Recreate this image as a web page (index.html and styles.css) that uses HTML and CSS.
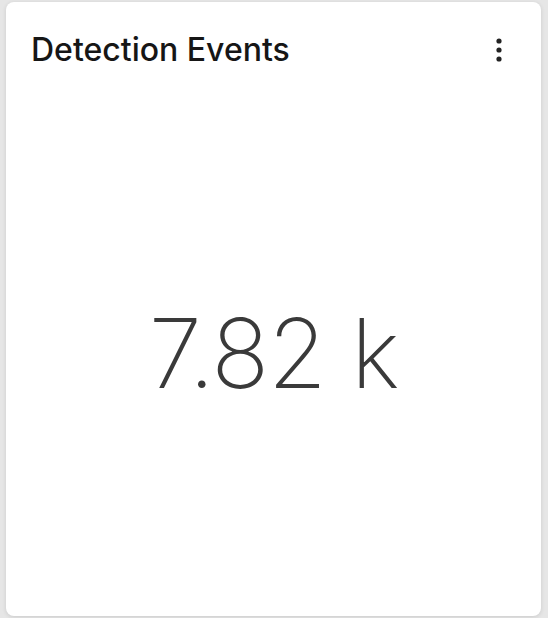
FILE: index.html
```html
<!DOCTYPE html>
<html lang="en">
<head>
    <meta charset="UTF-8">
    <title>Detection Events</title>
    <link rel="stylesheet" href="styles.css">
</head>
<body>
<div class="card">
    <div class="card-head">
        <h2 class="card-title">Detection Events</h2>
        <span class="card-menu">
            <svg width="6" height="24" viewBox="0 0 6 24">
                <circle cx="3" cy="3" r="2.6"/>
                <circle cx="3" cy="12" r="2.6"/>
                <circle cx="3" cy="21" r="2.6"/>
            </svg>
        </span>
    </div>
    <div class="card-body">
        <div class="stat">7.82 k</div>
    </div>
</div>
</body>
</html>
```

FILE: styles.css
```css
* {
    padding: 0;
    margin: 0;
    box-sizing: border-box;
}

body {
    background: #e6e6e6;
    font-family: Inter, "Noto Sans", sans-serif;
    height: 618px;
    overflow: hidden;
}

.card {
    margin: 2px 7px 0 6px;
    height: 614px;
    background: #fff;
    border-radius: 8px;
    box-shadow: 0 1px 4px rgba(0, 0, 0, 0.12);
    display: flex;
    flex-direction: column;
}

.card-head {
    display: flex;
    align-items: center;
    justify-content: space-between;
    padding: 30px 39px 0 25px;
}

.card-title {
    font-size: 32px;
    font-weight: 500;
    color: #161616;
    line-height: 36px;
}

.card-menu svg {
    display: block;
    fill: #222;
}

.card-body {
    flex: 1;
    display: flex;
    align-items: center;
    justify-content: center;
    padding-top: 22px;
}

.stat {
    font-size: 96px;
    font-weight: 200;
    color: #3a3a3a;
    letter-spacing: -1.5px;
}
```
